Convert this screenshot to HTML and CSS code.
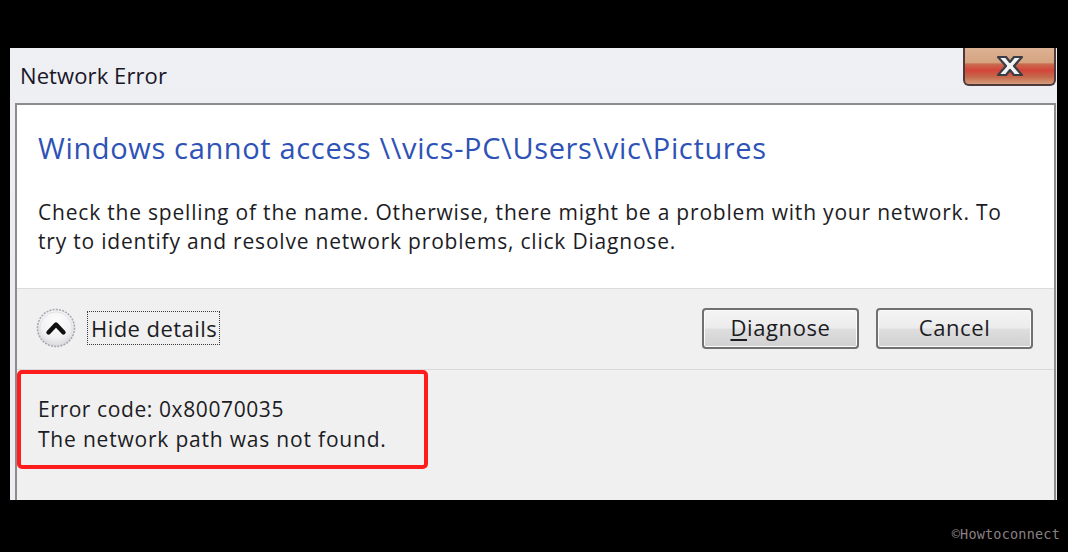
FILE: index.html
```html
<!DOCTYPE html>
<html lang="en">
<head>
<meta charset="utf-8">
<title>Network Error</title>
<link rel="stylesheet" href="styles.css">
</head>
<body>
<div class="page">
  <div class="window">
    <div class="titlebar">
      <div class="title">Network Error</div>
      <div class="close-btn" aria-label="Close">
        <svg class="close-x" width="38" height="26" viewBox="0 0 38 26">
          <path d="M7 4 L15 4 L19 9 L23 4 L31 4 L23 13 L31 22 L23 22 L19 17 L15 22 L7 22 L15 13 Z" fill="#f4f4f4" stroke="#3c3c46" stroke-width="2.2" stroke-linejoin="round"/>
        </svg>
      </div>
    </div>
    <div class="pane">
      <div class="main">
        <h1 class="heading">Windows cannot access \\vics-PC\Users\vic\Pictures</h1>
        <p class="message">Check the spelling of the name. Otherwise, there might be a problem with your network. To try to identify and resolve network problems, click Diagnose.</p>
      </div>
      <div class="actions">
        <div class="toggle">
          <span class="chevron">
            <svg width="40" height="40" viewBox="0 0 40 40">
              <defs>
                <radialGradient id="cg" cx="50%" cy="35%" r="60%">
                  <stop offset="0" stop-color="#ffffff"/>
                  <stop offset="0.7" stop-color="#f1f1f3"/>
                  <stop offset="1" stop-color="#dcdadd"/>
                </radialGradient>
              </defs>
              <circle cx="20" cy="20" r="18.5" fill="url(#cg)" stroke="#a9a9ae" stroke-width="1.6" stroke-dasharray="2 1.2"/>
              <circle cx="20" cy="20" r="16.2" fill="none" stroke="#e2e2e6" stroke-width="1"/>
              <path d="M12.5 24.5 L20 16.5 L27.5 24.5" fill="none" stroke="#111" stroke-width="4.4" stroke-linecap="round" stroke-linejoin="round"/>
            </svg>
          </span>
          <span class="toggle-label">Hide details</span>
        </div>
        <div class="buttons">
          <button class="btn"><span class="u">D</span>iagnose</button>
          <button class="btn">Cancel</button>
        </div>
      </div>
      <div class="details">
        <div class="error-box">
          <div class="err-line">Error code: 0x80070035</div>
          <div class="err-line">The network path was not found.</div>
        </div>
      </div>
    </div>
  </div>
  <div class="footer">
    <span class="watermark">©Howtoconnect</span>
  </div>
</div>
</body>
</html>
```

FILE: styles.css
```css
* { box-sizing: border-box; }
html, body {
  margin: 0;
  padding: 0;
  background: #000;
  width: 1068px;
  height: 552px;
  overflow: hidden;
}
body {
  font-family: "Open Sans", "Noto Sans", "DejaVu Sans", sans-serif;
  color: #1c1c24;
}
.page {
  display: flex;
  flex-direction: column;
  padding-top: 48px;
  padding-left: 10px;
}
.window {
  width: 1047px;
  height: 452px;
  background: linear-gradient(180deg, #eef0f3 0%, #e9ebef 60%, #eceef1 100%);
  display: flex;
  flex-direction: column;
}
.titlebar {
  height: 55px;
  display: flex;
  justify-content: space-between;
  align-items: flex-start;
  flex-shrink: 0;
}
.title {
  padding-left: 10px;
  padding-top: 13px;
  font-size: 22px;
  line-height: 28px;
  color: #1a1628;
  letter-spacing: 0.1px;
}
.close-btn {
  width: 93px;
  height: 38px;
  margin-right: 1px;
  border: 2px solid #4e3a3c;
  border-top: none;
  border-radius: 0 0 6px 6px;
  background: linear-gradient(180deg, #dcb193 0%, #d6a582 40%, #c96b4e 45%, #d4453a 62%, #c4684a 80%, #d59c7c 100%);
  display: flex;
  align-items: center;
  justify-content: center;
}
.close-x { display: block; }
.pane {
  flex: 1;
  margin-left: 5px;
  margin-right: 1px;
  border: 2px solid #8d8b8e;
  border-bottom: none;
  background: #f0f0f0;
  display: flex;
  flex-direction: column;
}
.main {
  height: 184px;
  background: #fff;
  border-bottom: 1px solid #dcdcdc;
  padding: 23px 20px 0 21px;
}
.heading {
  margin: 0;
  font-weight: normal;
  font-size: 29px;
  line-height: 40px;
  color: #2f52b6;
  letter-spacing: 0.65px;
}
.message {
  margin: 30px 0 0;
  font-size: 21px;
  line-height: 29px;
  color: #1c1c24;
  letter-spacing: 0.8px;
  width: 990px;
}
.actions {
  height: 81px;
  border-bottom: 1px solid #d9d9dc;
  display: flex;
  justify-content: space-between;
  align-items: center;
  padding: 0 21px 2px 19px;
}
.toggle {
  display: flex;
  align-items: center;
  gap: 11px;
}
.chevron { display: block; width: 40px; height: 40px; }
.chevron svg { display: block; }
.toggle-label {
  font-size: 22px;
  line-height: 32px;
  padding: 0 2px 0 3px;
  border: 1px dotted #3a3a3a;
  letter-spacing: 0.45px;
}
.buttons {
  display: flex;
  gap: 17px;
}
.btn {
  width: 157px;
  height: 41px;
  border: 2px solid #707070;
  border-radius: 4px;
  background: linear-gradient(180deg, #f4f4f4 0%, #ececec 48%, #dedede 52%, #d2d0d2 100%);
  box-shadow: inset 0 0 0 1px #fbfbfb;
  font-family: "Open Sans", "Noto Sans", sans-serif;
  font-size: 22px;
  color: #1c1c24;
  letter-spacing: 0.6px;
  padding: 0 0 2px;
}
.u { text-decoration: underline; text-underline-offset: 3px; }
.details {
  flex: 1;
}
.error-box {
  width: 411px;
  height: 99px;
  border: 4px solid #ff1c1c;
  border-radius: 5px;
  padding: 20px 0 0 17px;
  font-size: 21px;
  line-height: 30px;
  letter-spacing: 0.6px;
}
.err-line + .err-line { letter-spacing: 0.8px; }
.footer {
  display: flex;
  justify-content: flex-end;
  padding: 26px 8px 0 0;
}
.watermark {
  font-family: "DejaVu Sans Mono", monospace;
  font-size: 13.5px;
  color: #8a8084;
  letter-spacing: 0.2px;
}
```
